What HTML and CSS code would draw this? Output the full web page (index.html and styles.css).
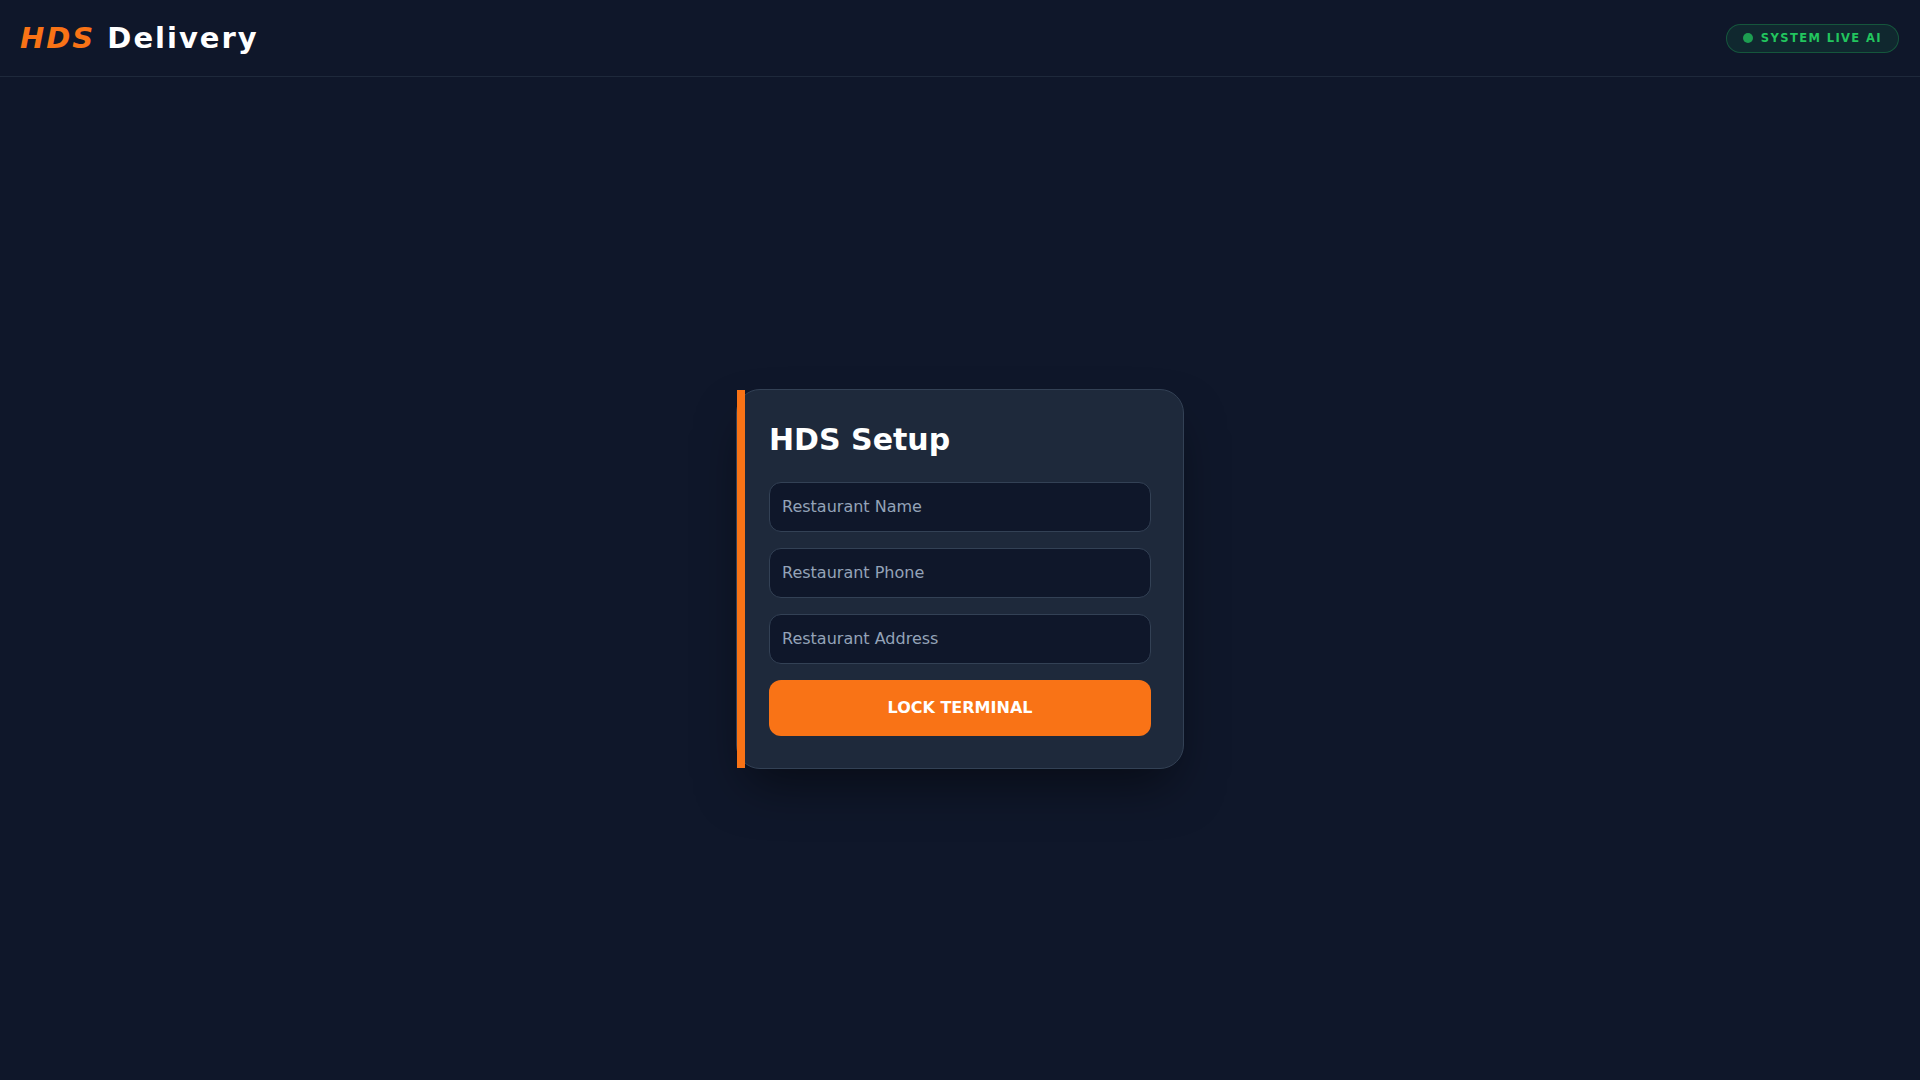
FILE: index.html
```html
<!DOCTYPE html>
<html lang="en">
<head>
    <meta charset="UTF-8">
    <meta name="viewport" content="width=device-width, initial-scale=1.0">
    <title>HDS Delivery</title>
    <link rel="stylesheet" href="styles.css">
</head>
<body>
    <header class="top-bar">
        <div class="logo"><span class="logo-accent">HDS</span> Delivery</div>
        <div class="status-badge">
            <span class="status-dot"></span>
            <span class="status-text">SYSTEM LIVE AI</span>
        </div>
    </header>

    <main class="main">
        <form class="setup-card" onsubmit="event.preventDefault()">
            <h1 class="setup-title">HDS Setup</h1>
            <div class="setup-fields">
                <input type="text" class="form-input" placeholder="Restaurant Name">
                <input type="tel" class="form-input" placeholder="Restaurant Phone">
                <input type="text" class="form-input" placeholder="Restaurant Address">
                <button type="submit" class="lock-btn">LOCK TERMINAL</button>
            </div>
        </form>
    </main>
</body>
</html>
```

FILE: styles.css
```css
* {
    margin: 0;
    padding: 0;
    box-sizing: border-box;
}

body {
    font-family: 'DejaVu Sans', 'Noto Sans', sans-serif;
    background: #0f172a;
    color: white;
    min-height: 100vh;
    display: flex;
    flex-direction: column;
}

.top-bar {
    height: 77px;
    padding: 0 21px 0 20px;
    border-bottom: 1px solid #1e293b;
    display: flex;
    justify-content: space-between;
    align-items: center;
}

.logo {
    font-size: 29px;
    font-weight: 700;
    letter-spacing: 2px;
}

.logo-accent {
    color: #f97316;
    font-style: italic;
}

.status-badge {
    display: flex;
    align-items: center;
    gap: 8px;
    padding: 6px 16px;
    border: 1px solid rgba(34, 197, 94, 0.3);
    border-radius: 999px;
    background: rgba(34, 197, 94, 0.1);
}

.status-dot {
    width: 10px;
    height: 10px;
    border-radius: 50%;
    background: #22c55e;
    opacity: 0.75;
}

.status-text {
    color: #22c55e;
    font-size: 11.5px;
    line-height: 15px;
    font-weight: 700;
    letter-spacing: 1.4px;
}

.main {
    flex: 1;
    display: flex;
    align-items: center;
    justify-content: center;
    padding: 20px;
}

.setup-card {
    position: relative;
    width: 100%;
    max-width: 448px;
    padding: 32px;
    background: #1e293b;
    border: 1px solid #334155;
    border-radius: 24px;
    box-shadow: 0 25px 50px -12px rgba(0, 0, 0, 0.5);
}

.setup-card::before {
    content: '';
    position: absolute;
    top: 0;
    bottom: 0;
    left: 0;
    width: 8px;
    background: #f97316;
}

.setup-title {
    font-size: 30px;
    line-height: 36px;
    font-weight: 700;
    margin-bottom: 24px;
}

.setup-fields {
    display: flex;
    flex-direction: column;
    gap: 16px;
}

.form-input {
    width: 100%;
    padding: 12px;
    background: #0f172a;
    border: 1px solid #334155;
    border-radius: 12px;
    color: white;
    font-family: inherit;
    font-size: 16px;
    line-height: 24px;
}

.form-input::placeholder {
    color: #94a3b8;
}

.form-input:focus {
    outline: none;
    border-color: #f97316;
}

.lock-btn {
    width: 100%;
    padding: 16px;
    background: #f97316;
    border: none;
    border-radius: 12px;
    color: white;
    font-family: inherit;
    font-size: 16px;
    line-height: 24px;
    font-weight: 700;
    cursor: pointer;
}
```
